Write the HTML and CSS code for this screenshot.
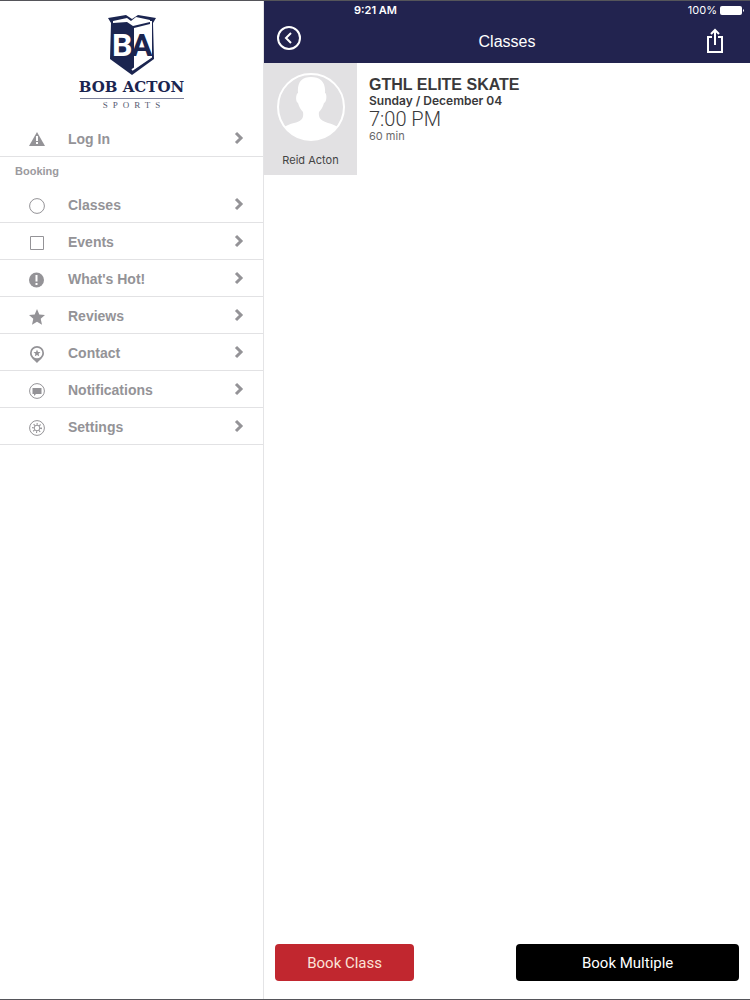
FILE: index.html
```html
<!DOCTYPE html>
<html lang="en-US">
<head>
    <meta charset="UTF-8">
    <meta name="viewport" content="width=device-width, initial-scale=1.0">
    <title>Bob Acton Sports - Classes</title>
    <link rel="stylesheet" href="styles.css">
</head>
<body>

<svg class="defs" aria-hidden="true">
    <symbol id="chevron" viewBox="0 0 10 14">
        <path d="M2 2l5 5-5 5" fill="none" stroke="currentColor" stroke-width="3"/>
    </symbol>
</svg>

<aside class="sidebar">
    <div class="logo">
        <svg class="shield" viewBox="0 0 50 62" aria-hidden="true">
            <path d="M1 4L19 1l6 4 6-4 18 3-3 5 1 36-22 16L3 45 4 9z" fill="#1b2550"/>
            <path d="M6 7l14-3 4 3 5-4 14 3v2L26 12 20 8 6 9z" fill="#fff"/>
            <path d="M27 14l16-4v34L27 55z" fill="#fff"/>
            <path d="M25 56l19-13V7" fill="none" stroke="#fff" stroke-width="2"/>
            <text x="5" y="42" class="monogram">B</text>
            <text x="24" y="42" class="monogram dark">A</text>
        </svg>
        <div class="logo-name">BOB ACTON</div>
        <div class="logo-rule"></div>
        <div class="logo-sub">SPORTS</div>
    </div>

    <nav aria-label="Main menu">
        <a class="item" href="#">
            <svg class="icon" viewBox="0 0 16 16"><path d="M8 0l8 14H0z"/><path d="M8 4v5M8 10v2" stroke="#fff" stroke-width="2"/></svg>
            <span class="label">Log In</span>
            <svg class="chevron"><use href="#chevron"/></svg>
        </a>
        <h2 class="section">Booking</h2>
        <a class="item" href="#">
            <svg class="icon" viewBox="0 0 16 16"><circle cx="8" cy="8" r="7.4" class="line"/></svg>
            <span class="label">Classes</span>
            <svg class="chevron"><use href="#chevron"/></svg>
        </a>
        <a class="item" href="#">
            <svg class="icon" viewBox="0 0 16 16"><path d="M1.5 1.5h13v13h-13z" class="line"/></svg>
            <span class="label">Events</span>
            <svg class="chevron"><use href="#chevron"/></svg>
        </a>
        <a class="item" href="#">
            <svg class="icon" viewBox="0 0 16 16"><circle cx="7.5" cy="8" r="7.5"/><path d="M7.5 3v6.5M7.5 11v2" stroke="#fff" stroke-width="2"/></svg>
            <span class="label">What's Hot!</span>
            <svg class="chevron"><use href="#chevron"/></svg>
        </a>
        <a class="item" href="#">
            <svg class="icon" viewBox="0 0 16 16"><path d="M8 0l2.3 5.4 5.7.5-4.3 3.9 1.3 6L8 12.7 3 15.8l1.3-6L0 5.9l5.7-.5z"/></svg>
            <span class="label">Reviews</span>
            <svg class="chevron"><use href="#chevron"/></svg>
        </a>
        <a class="item" href="#">
            <svg class="icon" viewBox="0 0 16 16"><path d="M8 0a7 7 0 0 1 7 7c0 4-3 6-7 10C4 13 1 11 1 7a7 7 0 0 1 7-7z"/><circle cx="8" cy="7" r="5.3" fill="#fff"/><path d="M8 3.500l1 2.400 2.500.2-1.900 1.700.6 2.500L8 9l-2.200 1.300.6-2.500-1.900-1.700 2.500-.2z"/></svg>
            <span class="label">Contact</span>
            <svg class="chevron"><use href="#chevron"/></svg>
        </a>
        <a class="item" href="#">
            <svg class="icon" viewBox="0 0 16 16"><circle cx="8" cy="8" r="7.4" class="line"/><path d="M3.500 5h9v6H7l-2 2v-2H3.500z"/></svg>
            <span class="label">Notifications</span>
            <svg class="chevron"><use href="#chevron"/></svg>
        </a>
        <a class="item" href="#">
            <svg class="icon" viewBox="0 0 16 16"><circle cx="8" cy="8" r="7.4" class="line"/><circle cx="8" cy="8" r="2.800" class="line"/><circle cx="8" cy="8" r="4" class="line teeth"/></svg>
            <span class="label">Settings</span>
            <svg class="chevron"><use href="#chevron"/></svg>
        </a>
    </nav>
</aside>

<main class="content">
    <header class="topbar">
        <div class="status">
            <span class="time">9:21 AM</span>
            <span class="battery">100%
                <svg width="25" height="10" viewBox="0 0 25 10" aria-hidden="true"><rect width="22" height="9" y="1" rx="2" fill="#fff"/><path d="M23 4q2 1.500 0 3z" fill="#fff"/></svg>
            </span>
        </div>
        <div class="titlebar">
            <button class="nav-button" aria-label="Back">
                <svg width="24" height="24" viewBox="0 0 24 24"><circle cx="12" cy="11" r="11"/><path d="M14 6l-5 5 5 5"/></svg>
            </button>
            <h1>Classes</h1>
            <button class="nav-button share" aria-label="Share">
                <svg width="18" height="26" viewBox="0 0 18 26"><path d="M6 9H2v15h14V9h-4M9 17V2M5 6l4-4 4 4"/></svg>
            </button>
        </div>
    </header>

    <section class="class-info">
        <div class="trainer">
            <svg class="avatar" viewBox="0 0 68 68" aria-hidden="true">
                <defs><clipPath id="round"><circle cx="34" cy="34" r="33"/></clipPath></defs>
                <path clip-path="url(#round)" fill="#fff" d="M21 20C20 9 25 4 34 4s15 5 14 16c2 0 2 9-1 10-1 4-3 7-5 9-1 7 3 9 9 11 8 2 12 5 15 9v10H2V59c3-4 7-7 15-9 7-2 10-4 9-11-2-2-4-5-5-9-3-1-2-10 0-10z"/>
                <circle cx="34" cy="34" r="33" fill="none" stroke="#fff" stroke-width="2"/>
            </svg>
            <span>Reid Acton</span>
        </div>
        <div class="details">
            <h2>GTHL ELITE SKATE</h2>
            <div class="date">Sunday / December 04</div>
            <div class="start">7:00 PM</div>
            <div class="duration">60 min</div>
        </div>
    </section>

    <footer class="actions">
        <button class="book">Book Class</button>
        <button class="book multiple">Book Multiple</button>
    </footer>
</main>

</body>
</html>
```
FILE: styles.css
```css
* {
    box-sizing: border-box;
}
body {
    margin: 0;
    min-height: 100vh;
    display: flex;
    font-family: "Liberation Sans", Arial, sans-serif;
    background-color: #fff;
    border-top: 1px solid #55555a;
    border-bottom: 1px solid #55555a;
}
h1, h2 {
    margin: 0;
}
button {
    border: none;
    cursor: pointer;
    font-family: Roboto, sans-serif;
}
.defs {
    display: none;
}

/* sidebar */
.sidebar {
    width: 264px;
    flex-shrink: 0;
    border-right: 1px solid #e4e4e6;
}
.logo {
    display: flex;
    flex-direction: column;
    align-items: center;
    padding-top: 13px;
    height: 119px;
    color: #1b2550;
}
.shield {
    width: 50px;
    height: 62px;
}
.monogram {
    font-family: Roboto, sans-serif;
    font-size: 32px;
    font-weight: 700;
    fill: #fff;
}
.monogram.dark {
    fill: #1b2550;
}
.logo-name {
    font-family: "DejaVu Serif", serif;
    font-size: 15px;
    font-weight: bold;
    line-height: 22px;
}
.logo-rule {
    width: 104px;
    height: 1px;
    background-color: #7c819a;
}
.logo-sub {
    font-family: "Liberation Serif", serif;
    font-size: 9px;
    line-height: 12px;
    letter-spacing: 5px;
    padding-left: 5px;
    color: #555a70;
}
.item {
    display: flex;
    align-items: center;
    height: 37px;
    padding: 0 19px 0 29px;
    border-bottom: 1px solid #e2e2e4;
    color: #949397;
    text-decoration: none;
}
.icon {
    width: 16px;
    height: 16px;
    margin-top: 3px;
    fill: currentColor;
    overflow: visible;
}
.line {
    fill: none;
    stroke: currentColor;
}
.teeth {
    stroke-width: 2;
    stroke-dasharray: 1 2;
}
.label {
    flex: 1;
    margin-top: 2px;
    margin-left: 23px;
    font-size: 14px;
    font-weight: bold;
}
.chevron {
    width: 10px;
    height: 14px;
}
.section {
    padding: 0 15px;
    font-size: 11px;
    font-weight: bold;
    line-height: 29px;
    color: #9b9a9e;
}

/* content */
.content {
    flex: 1;
    display: flex;
    flex-direction: column;
}
.topbar {
    height: 62px;
    background-color: #22234f;
    color: #fff;
}
.status {
    display: flex;
    justify-content: space-between;
    padding: 0 5px 0 90px;
    font-family: Inter, sans-serif;
    font-size: 11px;
    line-height: 18px;
}
.time {
    font-weight: 600;
}
.battery {
    display: flex;
    align-items: center;
    gap: 3px;
}
.titlebar {
    display: grid;
    grid-template-columns: 1fr auto 1fr;
    align-items: center;
    height: 44px;
    padding: 0 13px;
}
.titlebar h1 {
    padding-top: 2px;
    font-size: 16px;
    font-weight: normal;
}
.nav-button {
    display: flex;
    justify-self: start;
    padding: 0;
    margin-bottom: 4px;
    background: none;
}
.nav-button.share {
    justify-self: end;
    margin: 0;
    padding-right: 13px;
}
.nav-button svg {
    fill: none;
    stroke: #fff;
    stroke-width: 2;
    overflow: visible;
}
.class-info {
    flex: 1;
    display: flex;
    align-items: flex-start;
}
.trainer {
    display: flex;
    flex-direction: column;
    align-items: center;
    gap: 12px;
    width: 93px;
    height: 112px;
    padding-top: 10px;
    background-color: #e2e1e3;
    color: #444;
    font-family: Inter, sans-serif;
    font-size: 11px;
}
.avatar {
    width: 68px;
    height: 68px;
}
.details {
    padding: 13px 12px;
    color: #3a393b;
}
.details h2 {
    font-size: 16px;
    line-height: 18px;
}
.date {
    font-family: Inter, sans-serif;
    font-size: 12px;
    font-weight: 600;
    line-height: 14px;
}
.start {
    font-family: Roboto, sans-serif;
    font-size: 20px;
    font-weight: 300;
    line-height: 22px;
}
.duration {
    font-family: Inter, sans-serif;
    font-size: 11px;
    line-height: 13px;
    color: #6a696c;
}
.actions {
    display: flex;
    justify-content: space-between;
    padding: 0 11px 18px;
}
.book {
    width: 30%;
    height: 37px;
    border-radius: 4px;
    background-color: #c1272f;
    color: #fbe3d8;
    font-size: 15px;
}
.book.multiple {
    width: 48%;
    background-color: #000;
    color: #fff;
}
```
